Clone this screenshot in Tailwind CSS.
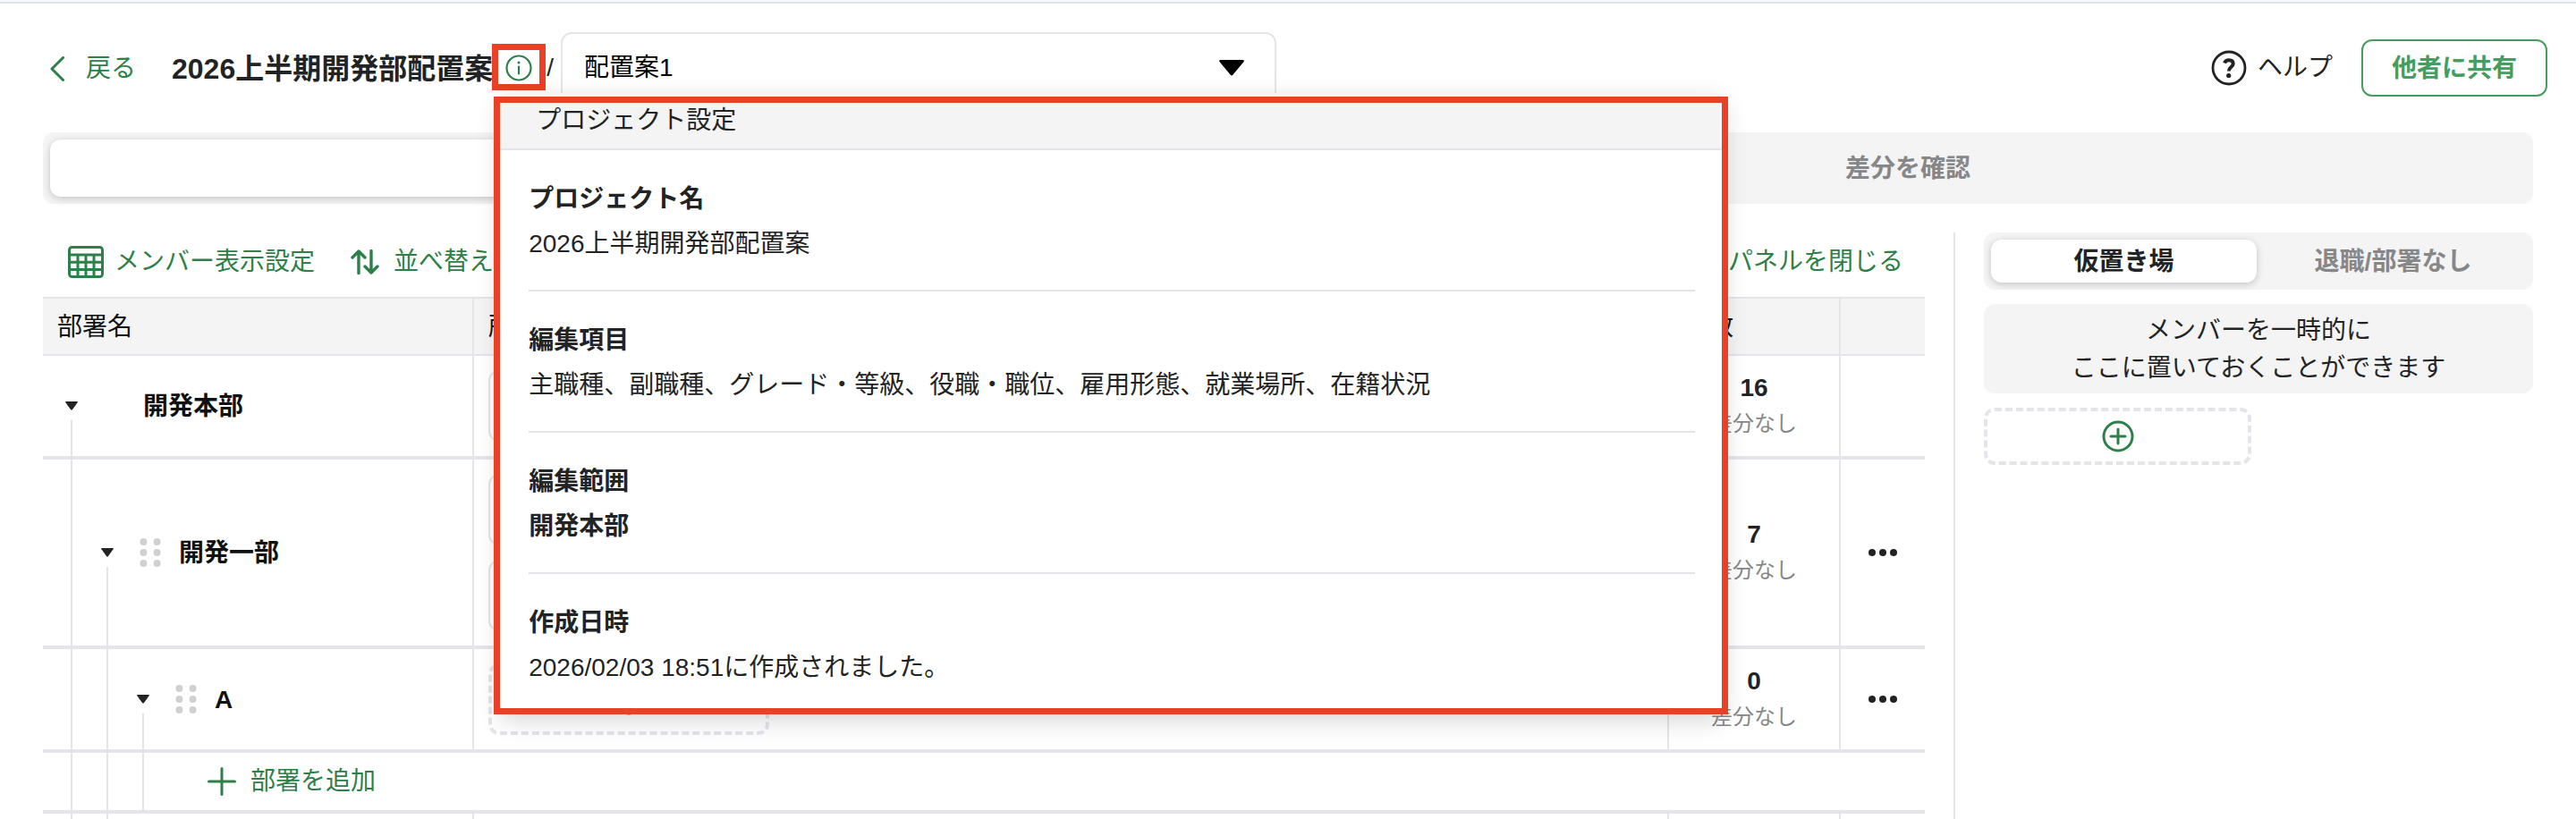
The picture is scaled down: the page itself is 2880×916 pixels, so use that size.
<!DOCTYPE html>
<html lang="ja">
<head>
<meta charset="UTF-8">
<meta name="viewport" content="width=device-width, initial-scale=1.0">
<title>2026上半期開発部配置案</title>
<script src="https://cdn.jsdelivr.net/npm/@tailwindcss/browser@4"></script>
</head>
<body class="h-screen overflow-hidden bg-white text-[28px] leading-[42px] text-[#222325] font-['Liberation_Sans','Noto_Sans_CJK_JP',sans-serif]">
<div class="h-1 border-t-2 border-b-2 border-t-[#f8f8ff] border-b-[#dfe3ec]"></div>

<header class="flex items-center pt-8 pl-14 pr-8">
  <a href="#" class="flex items-center gap-6 pt-0.5 text-[#2e8049]">
    <svg class="w-4 h-7" viewBox="0 0 16 28" fill="none" stroke="currentColor" stroke-width="3" stroke-linecap="round" stroke-linejoin="round"><path d="M14.5 1.5 2 14l12.500 12.500"/></svg>
    戻る
  </a>
  <h1 class="ml-10 pt-0.5 text-[32px] leading-12 font-bold">2026上半期開発部配置案</h1>

  <div class="relative z-20 ml-3.5 w-[30px] h-[30px]">
    <button type="button" aria-label="プロジェクト設定を表示" class="block text-[#2e8049]">
      <svg class="w-[30px] h-[30px]" viewBox="0 0 30 30" fill="none" stroke="currentColor" stroke-width="2.200" stroke-linecap="round"><circle cx="15" cy="15" r="13.500"/><path d="M15 13.500v8"/><circle cx="15" cy="9" r="1.500" fill="currentColor" stroke="none"/></svg>
    </button>
    <div class="absolute -inset-x-[15px] -top-3 -bottom-2.5 border-7 border-[#ea4025] pointer-events-none"></div>

    <!-- project settings popover -->
    <section class="absolute -left-1.5 top-[43px] w-[1368px] rounded-xl bg-white shadow-[0_8px_28px_rgba(0,0,0,0.16)]">
      <h2 class="h-16 pl-10 leading-[62px] rounded-t-xl bg-[#f4f4f4] border-b-2 border-[#e4e4ea]">プロジェクト設定</h2>
      <dl class="px-8 leading-[50px]">
        <div class="pt-[30px] pb-[26px] border-b-2 border-[#e4e4ea]">
          <dt class="font-bold">プロジェクト名</dt>
          <dd>2026上半期開発部配置案</dd>
        </div>
        <div class="pt-[30px] pb-[26px] border-b-2 border-[#e4e4ea]">
          <dt class="font-bold">編集項目</dt>
          <dd>主職種、副職種、グレード・等級、役職・職位、雇用形態、就業場所、在籍状況</dd>
        </div>
        <div class="pt-[30px] pb-[26px] border-b-2 border-[#e4e4ea]">
          <dt class="font-bold">編集範囲</dt>
          <dd class="font-bold">開発本部</dd>
        </div>
        <div class="pt-[30px] pb-[26px]">
          <dt class="font-bold">作成日時</dt>
          <dd>2026/02/03 18:51に作成されました。</dd>
        </div>
      </dl>
      <div class="absolute -left-[7px] -right-[5px] top-1 -bottom-px border-7 border-[#ea4025] pointer-events-none"></div>
    </section>
  </div>

  <span class="ml-4">/</span>
  <div class="relative ml-2 w-200">
    <select aria-label="配置案" class="appearance-none block w-full h-20 pl-6 pr-20 rounded-xl border-2 border-[#e4e4ea] bg-white text-black">
      <option>配置案1</option>
    </select>
    <svg class="absolute right-9 top-[31px] w-7 h-[18px] pointer-events-none" viewBox="0 0 28 18"><path d="M2 0h24q3 0 1.200 2.500L15.500 16.500q-1.500 1.800-3 0L.8 2.500Q-1 0 2 0Z"/></svg>
  </div>

  <a href="#" class="ml-auto flex items-center gap-3">
    <svg class="w-10 h-10" viewBox="0 0 40 40" fill="none" stroke="currentColor" stroke-width="2.800"><circle cx="20" cy="20" r="18"/><path d="M15 14.500c1-2.300 2.800-3.200 5-3.200 2.900 0 4.700 1.500 4.700 4 0 3.700-4.900 3.900-4.900 8.200" stroke-width="4"/><circle cx="19.700" cy="28.500" r="2.600" fill="currentColor" stroke="none"/></svg>
    ヘルプ
  </a>
  <button type="button" class="ml-8 w-52 h-16 pt-0.5 rounded-xl border-2 border-[#459e5f] text-[#459e5f] font-bold">他者に共有</button>
</header>

<main class="px-12 pt-8">
  <div class="flex gap-1 p-2 rounded-xl bg-[#f4f4f4] font-bold">
    <button type="button" class="flex-1 h-16 pt-0.5 rounded-xl bg-white shadow-[0_2px_8px_rgba(0,0,0,0.2)]">配置を編集</button>
    <button type="button" class="flex-1 h-16 pt-0.5 text-[#868789]">差分を確認</button>
  </div>

  <div class="mt-8 flex gap-8">
    <div class="flex-1">
      <div class="flex items-center h-16 mb-2 pt-0.5 pl-7 pr-6 text-[#2e8049]">
        <button type="button" class="flex items-center gap-3">
          <svg class="w-10 h-9" viewBox="0 0 40 36" fill="none" stroke="currentColor" stroke-width="3"><rect x="1.500" y="1.500" width="37" height="33" rx="3"/><path d="M1.500 10h37M1.500 18.200h37M1.500 26.400h37M11 10v24.500M20 10v24.500M29 10v24.500"/></svg>
          メンバー表示設定
        </button>
        <button type="button" class="ml-10 flex items-center gap-4">
          <svg class="w-8 h-7" viewBox="0 0 32 28" fill="none" stroke="currentColor" stroke-width="3.400" stroke-linecap="round" stroke-linejoin="round"><path d="M9 26.500V2M2 9l7-7 7 7M23 1.500V26M16 19l7 7 7-7"/></svg>
          並べ替え
        </button>
        <button type="button" class="ml-auto">パネルを閉じる</button>
      </div>

      <table class="w-full table-fixed border-separate border-spacing-0 text-[#101112]">
        <colgroup><col class="w-[482px]"><col><col class="w-48"><col class="w-[94px]"></colgroup>
        <thead>
          <tr class="text-left bg-[#f4f4f4]">
            <th class="h-[66px] px-4 pt-0.5 pb-0 font-normal border-y-2 border-r-2 border-[#e4e4ea]">部署名</th>
            <th class="px-4 pt-0.5 pb-0 font-normal border-y-2 border-r-2 border-[#e4e4ea]">所属メンバー</th>
            <th class="px-4 pt-0.5 pb-0 font-normal border-y-2 border-r-2 border-[#e4e4ea]">人数</th>
            <th class="border-y-2 border-[#e4e4ea]"><span class="sr-only">操作</span></th>
          </tr>
        </thead>
        <tbody>
          <tr>
            <td class="h-29 p-0 border-r-2 border-b-4 border-[#e4e4ea]">
              <div class="flex h-full pl-3">
                <div class="grid w-10 grid-rows-[1fr_32px_1fr] justify-items-center">
                  <button type="button" aria-label="開発本部を閉じる" class="row-start-2"><svg class="w-3.5 h-2.5" viewBox="0 0 14 10" fill="#222325"><path d="M1 0h12q1.500 0 .6 1.300L8 9q-1 1.200-2 0L.4 1.300Q-.5 0 1 0Z"/></svg></button>
                  <div class="row-start-3 w-0.5 bg-[#e4e4ea]"></div>
                </div>
                <div class="w-15"></div>
                <div class="self-center pt-0.5 font-bold">開発本部</div>
              </div>
            </td>
            <td class="p-0 px-4 border-r-2 border-b-4 border-[#e4e4ea]"><div class="w-[314px] h-20 rounded-xl border-2 border-[#e4e4ea]"></div></td>
            <td class="p-0 text-center leading-10 border-r-2 border-b-4 border-[#e4e4ea]">
              <div class="font-bold text-[#222325]">16</div>
              <div class="text-2xl leading-10 text-[#868789]">差分なし</div>
            </td>
            <td class="border-b-4 border-[#e4e4ea]"></td>
          </tr>
          <tr>
            <td class="h-53 p-0 border-r-2 border-b-4 border-[#e4e4ea]">
              <div class="flex h-full pl-3">
                <div class="flex w-10 justify-center"><div class="w-0.5 bg-[#e4e4ea]"></div></div>
                <div class="grid w-10 grid-rows-[1fr_32px_1fr] justify-items-center">
                  <button type="button" aria-label="開発一部を閉じる" class="row-start-2"><svg class="w-3.5 h-2.5" viewBox="0 0 14 10" fill="#222325"><path d="M1 0h12q1.500 0 .6 1.300L8 9q-1 1.200-2 0L.4 1.300Q-.5 0 1 0Z"/></svg></button>
                  <div class="row-start-3 w-0.5 bg-[#e4e4ea]"></div>
                </div>
                <div class="flex w-14 mr-1 items-center justify-center">
                  <svg class="w-6 h-8" viewBox="0 0 24 32" fill="#d0d0d0"><circle cx="4.500" cy="4" r="4"/><circle cx="19.500" cy="4" r="4"/><circle cx="4.500" cy="16" r="4"/><circle cx="19.500" cy="16" r="4"/><circle cx="4.500" cy="28" r="4"/><circle cx="19.500" cy="28" r="4"/></svg>
                </div>
                <div class="self-center pt-0.5 font-bold">開発一部</div>
              </div>
            </td>
            <td class="p-0 px-4 border-r-2 border-b-4 border-[#e4e4ea]">
              <div class="w-[314px] h-20 mb-4 rounded-xl border-2 border-[#e4e4ea]"></div>
              <div class="w-[314px] h-20 rounded-xl border-2 border-[#e4e4ea]"></div>
            </td>
            <td class="p-0 text-center leading-10 border-r-2 border-b-4 border-[#e4e4ea]">
              <div class="font-bold text-[#222325]">7</div>
              <div class="text-2xl leading-10 text-[#868789]">差分なし</div>
            </td>
            <td class="p-0 border-b-4 border-[#e4e4ea]">
              <button type="button" aria-label="開発一部のメニュー" class="flex w-full h-8 items-center justify-center"><svg class="w-8 h-2" viewBox="0 0 32 8" fill="#222325"><circle cx="4" cy="4" r="4"/><circle cx="16" cy="4" r="4"/><circle cx="28" cy="4" r="4"/></svg></button>
            </td>
          </tr>
          <tr>
            <td class="h-29 p-0 border-r-2 border-b-4 border-[#e4e4ea]">
              <div class="flex h-full pl-3">
                <div class="flex w-10 justify-center"><div class="w-0.5 bg-[#e4e4ea]"></div></div>
                <div class="flex w-10 justify-center"><div class="w-0.5 bg-[#e4e4ea]"></div></div>
                <div class="grid w-10 grid-rows-[1fr_32px_1fr] justify-items-center">
                  <button type="button" aria-label="Aを閉じる" class="row-start-2"><svg class="w-3.5 h-2.5" viewBox="0 0 14 10" fill="#222325"><path d="M1 0h12q1.500 0 .6 1.300L8 9q-1 1.200-2 0L.4 1.300Q-.5 0 1 0Z"/></svg></button>
                  <div class="row-start-3 w-0.5 bg-[#e4e4ea]"></div>
                </div>
                <div class="flex w-14 mr-1 items-center justify-center">
                  <svg class="w-6 h-8" viewBox="0 0 24 32" fill="#d0d0d0"><circle cx="4.500" cy="4" r="4"/><circle cx="19.500" cy="4" r="4"/><circle cx="4.500" cy="16" r="4"/><circle cx="19.500" cy="16" r="4"/><circle cx="4.500" cy="28" r="4"/><circle cx="19.500" cy="28" r="4"/></svg>
                </div>
                <div class="self-center pt-0.5 font-bold">A</div>
              </div>
            </td>
            <td class="p-0 px-4 border-r-2 border-b-4 border-[#e4e4ea]">
              <button type="button" aria-label="Aにメンバーを追加" class="flex w-[314px] h-20 items-center justify-center rounded-xl border-4 border-dashed border-[#e4e4ea] text-[#2e8049]">
                <svg class="w-9 h-9" viewBox="0 0 36 36" fill="none" stroke="currentColor" stroke-width="3" stroke-linecap="round"><circle cx="18" cy="18" r="16"/><path d="M18 10v16M10 18h16"/></svg>
              </button>
            </td>
            <td class="p-0 text-center leading-10 border-r-2 border-b-4 border-[#e4e4ea]">
              <div class="font-bold text-[#222325]">0</div>
              <div class="text-2xl leading-10 text-[#868789]">差分なし</div>
            </td>
            <td class="p-0 border-b-4 border-[#e4e4ea]">
              <button type="button" aria-label="Aのメニュー" class="flex w-full h-8 items-center justify-center"><svg class="w-8 h-2" viewBox="0 0 32 8" fill="#222325"><circle cx="4" cy="4" r="4"/><circle cx="16" cy="4" r="4"/><circle cx="28" cy="4" r="4"/></svg></button>
            </td>
          </tr>
          <tr>
            <td colspan="4" class="h-17 p-0 border-b-4 border-[#e4e4ea]">
              <div class="flex h-full pl-3">
                <div class="flex w-10 justify-center"><div class="w-0.5 bg-[#e4e4ea]"></div></div>
                <div class="flex w-10 justify-center"><div class="w-0.5 bg-[#e4e4ea]"></div></div>
                <div class="flex w-10 justify-center"><div class="w-0.5 bg-[#e4e4ea]"></div></div>
                <button type="button" class="ml-13 flex items-center gap-4 text-[#2e8049]">
                  <svg class="w-8 h-8" viewBox="0 0 32 32" fill="none" stroke="currentColor" stroke-width="3" stroke-linecap="round"><path d="M16 1.500v29M1.500 16h29"/></svg>
                  部署を追加
                </button>
              </div>
            </td>
          </tr>
          <tr>
            <td class="h-29 p-0 border-r-2 border-b-4 border-[#e4e4ea]">
              <div class="flex h-full pl-3">
                <div class="flex w-10 justify-center"><div class="w-0.5 bg-[#e4e4ea]"></div></div>
                <div class="flex w-10 justify-center"><div class="w-0.5 bg-[#e4e4ea]"></div></div>
              </div>
            </td>
            <td class="border-r-2 border-b-4 border-[#e4e4ea]"></td>
            <td class="border-r-2 border-b-4 border-[#e4e4ea]"></td>
            <td class="border-b-4 border-[#e4e4ea]"></td>
          </tr>
        </tbody>
      </table>
    </div>

    <div class="w-0.5 bg-[#e4e4ea]"></div>

    <aside class="w-[614px]">
      <div class="flex gap-1 p-2 rounded-xl bg-[#f4f4f4] font-bold">
        <button type="button" class="flex-1 h-12 pt-0.5 rounded-xl bg-white shadow-[0_2px_8px_rgba(0,0,0,0.2)]">仮置き場</button>
        <button type="button" class="flex-1 h-12 pt-0.5 text-[#868789]">退職/部署なし</button>
      </div>
      <p class="mt-4 pt-[9px] pb-[7px] rounded-xl bg-[#f4f4f4] text-center">メンバーを一時的に<br>ここに置いておくことができます</p>
      <button type="button" aria-label="メンバーを追加" class="mt-4 flex w-[299px] h-16 items-center justify-center rounded-xl border-4 border-dashed border-[#e4e4ea] text-[#2e8049]">
        <svg class="w-9 h-9" viewBox="0 0 36 36" fill="none" stroke="currentColor" stroke-width="3" stroke-linecap="round"><circle cx="18" cy="18" r="16"/><path d="M18 10v16M10 18h16"/></svg>
      </button>
    </aside>
  </div>
</main>
</body>
</html>
